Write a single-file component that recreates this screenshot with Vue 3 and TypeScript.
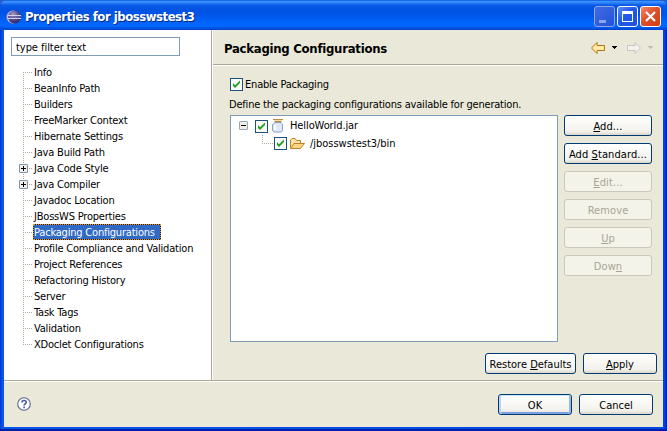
<script setup lang="ts">
interface Page {
  label: string
  expandable?: boolean
  selected?: boolean
}
interface Action {
  before: string
  key: string
  after: string
  disabled?: boolean
}

const pages: Page[] = [
  { label: 'Info' },
  { label: 'BeanInfo Path' },
  { label: 'Builders' },
  { label: 'FreeMarker Context' },
  { label: 'Hibernate Settings' },
  { label: 'Java Build Path' },
  { label: 'Java Code Style', expandable: true },
  { label: 'Java Compiler', expandable: true },
  { label: 'Javadoc Location' },
  { label: 'JBossWS Properties' },
  { label: 'Packaging Configurations', selected: true },
  { label: 'Profile Compliance and Validation' },
  { label: 'Project References' },
  { label: 'Refactoring History' },
  { label: 'Server' },
  { label: 'Task Tags' },
  { label: 'Validation' },
  { label: 'XDoclet Configurations' },
]

const actions: Action[] = [
  { before: '', key: 'A', after: 'dd...' },
  { before: 'Add ', key: 'S', after: 'tandard...' },
  { before: '', key: 'E', after: 'dit...', disabled: true },
  { before: 'Remove', key: '', after: '', disabled: true },
  { before: '', key: 'U', after: 'p', disabled: true },
  { before: 'Dow', key: 'n', after: '', disabled: true },
]
</script>

<template>
  <div class="desktop">
    <div class="window">
      <header class="titlebar">
        <svg class="app-icon" width="16" height="16" viewBox="0 0 16 16">
          <defs>
            <radialGradient id="orb" cx=".4" cy=".3" r=".75">
              <stop offset="0" stop-color="#a7a0cd" />
              <stop offset=".5" stop-color="#584f91" />
              <stop offset="1" stop-color="#2b2260" />
            </radialGradient>
          </defs>
          <circle cx="7" cy="8" r="6.500" fill="#c9b3cf" />
          <circle cx="8.500" cy="8" r="6.500" fill="url(#orb)" />
          <path d="M2 6.500H15M2 9.500H15" stroke="#d4d4f0" stroke-width="1" />
          <path d="M2 8H15" stroke="#6c659f" stroke-width="1" />
        </svg>
        <h1>Properties for jbosswstest3</h1>
        <span class="cap min"><i></i></span>
        <span class="cap max"><i></i></span>
        <span class="cap close">
          <svg width="19" height="19" viewBox="0 0 19 19"><path d="M5 5L14 14M14 5L5 14" stroke="#fff" stroke-width="2.2" /></svg>
        </span>
      </header>

      <main class="body">
        <aside class="nav">
          <input class="filter" type="text" value="type filter text" />
          <ul class="tree">
            <li v-for="page in pages" :key="page.label">
              <span class="branch">
                <svg v-if="page.expandable" class="expander" width="9" height="9" viewBox="0 0 9 9">
                  <rect x=".5" y=".5" width="8" height="8" rx=".5" fill="#f0eee6" stroke="#7b93b2" />
                  <path d="M2 4.5H7M4.5 2V7" stroke="#000" />
                </svg>
              </span>
              <span class="name" :class="{ selected: page.selected }">{{ page.label }}</span>
            </li>
          </ul>
        </aside>

        <section class="pane">
          <div class="heading">
            <h2>Packaging Configurations</h2>
            <svg width="66" height="14" viewBox="0 0 66 14">
              <path d="M4.500 7L10 1.500V4.500H17.500V9.500H10V12.500Z" fill="#ffebaa" stroke="#b8730d" stroke-linejoin="round" />
              <path d="M25 5H30V6H29V7H28V8H27V7H26V6H25Z" fill="#000" />
              <path d="M53.500 7L48 1.500V4.500H40.500V9.500H48V12.500Z" fill="#f2f1ed" stroke="#c6c4bc" stroke-linejoin="round" />
              <path d="M61 5H66V6H65V7H64V8H63V7H62V6H61Z" fill="#c2bfb2" />
            </svg>
          </div>
          <div class="content">
            <label class="enable">
              <svg class="check" width="13" height="13" viewBox="0 0 13 13">
                <rect x=".5" y=".5" width="12" height="12" fill="#fafaf7" stroke="#1c5180" />
                <path d="M3 5V8L5 10L10 5V2.500L5 7.300Z" fill="#21a121" />
              </svg>
              <span>Enable Packaging</span>
            </label>
            <p class="hint">Define the packaging configurations available for generation.</p>
            <div class="columns">
              <div class="list">
                <div class="row jar">
                  <svg class="expander" width="9" height="9" viewBox="0 0 9 9">
                    <rect x=".5" y=".5" width="8" height="8" rx=".5" fill="#f0eee6" stroke="#98a7b6" />
                    <path d="M2 4.500H7" stroke="#000" />
                  </svg>
                  <svg class="check" width="13" height="13" viewBox="0 0 13 13">
                    <rect x=".5" y=".5" width="12" height="12" fill="#fafaf7" stroke="#1c5180" />
                    <path d="M3 5V8L5 10L10 5V2.500L5 7.300Z" fill="#21a121" />
                  </svg>
                  <svg class="icon" width="16" height="16" viewBox="0 0 16 16">
                    <path d="M4 4.500H10L11.500 6.500V12.500L10.500 14H3L1.500 12.500V6.500Z" fill="#dfe8fa" stroke="#8b9fc5" />
                    <path d="M4 7V12" stroke="#fff" stroke-width="2" />
                    <path d="M2 1.500H12M3.500 3.500H10.500" stroke="#bd8a3d" />
                    <path d="M3 2.500H11" stroke="#fbdfa4" />
                  </svg>
                  <span>HelloWorld.jar</span>
                </div>
                <div class="row folder">
                  <span class="elbow"></span>
                  <svg class="check" width="13" height="13" viewBox="0 0 13 13">
                    <rect x=".5" y=".5" width="12" height="12" fill="#fafaf7" stroke="#1c5180" />
                    <path d="M3 5V8L5 10L10 5V2.500L5 7.300Z" fill="#21a121" />
                  </svg>
                  <svg class="icon" width="16" height="16" viewBox="0 0 16 16">
                    <path d="M1.500 12V4L3 2.500H6L7.500 4.500H11.500V7" fill="#fbe3a6" stroke="#bd8227" />
                    <path d="M1.500 12.500L5 7.500H15.500L11.500 12.500Z" fill="#fad583" stroke="#bd8227" stroke-linejoin="round" />
                  </svg>
                  <span>/jbosswstest3/bin</span>
                </div>
              </div>
              <div class="actions">
                <button v-for="a in actions" :key="a.before + a.key" :disabled="a.disabled" type="button">
                  {{ a.before }}<u>{{ a.key }}</u>{{ a.after }}
                </button>
              </div>
            </div>
            <div class="apply">
              <button class="restore" type="button">Restore <u>D</u>efaults</button>
              <button type="button"><u>A</u>pply</button>
            </div>
          </div>
        </section>
      </main>

      <footer class="footer">
        <svg width="14" height="14" viewBox="0 0 14 14">
          <circle cx="7" cy="7" r="6.300" fill="#fff" stroke="#56658f" stroke-width="1.100" />
          <path d="M4.900 5.600C4.900 2.900 9.200 2.900 9.200 5.300C9.200 6.900 7.100 6.800 7.100 8.500M7.100 9.600V11.200" fill="none" stroke="#4b5ba0" stroke-width="1.600" />
        </svg>
        <button class="ok" type="button">OK</button>
        <button type="button">Cancel</button>
      </footer>
    </div>
  </div>
</template>

<style>
body {
  margin: 0;
  overflow: hidden;
}
</style>

<style scoped>
* {
  box-sizing: border-box;
}
.desktop {
  width: 667px;
  height: 431px;
  background: #2a5ccc;
  font-family: Tahoma, "DejaVu Sans Condensed", "DejaVu Sans", sans-serif;
  font-stretch: condensed;
  font-size: 11px;
  letter-spacing: -0.2px;
  color: #000;
}
.window {
  display: flex;
  flex-direction: column;
  width: 667px;
  height: 431px;
  padding: 0 4px 4px;
  border-radius: 7px 7px 0 0;
  background: linear-gradient(90deg, #0030c8 0, #0855ec 2px, #0855ec 4px, #0046e0 663px, #0040dc 665px, #0018a0 667px);
  box-shadow: inset 0 -2px #0020a8;
}
.titlebar {
  display: flex;
  align-items: center;
  flex: none;
  height: 30px;
  margin: 0 -4px;
  padding: 3px 6px 0 6px;
  border-radius: 7px 7px 0 0;
  background: linear-gradient(#0a50d8 0, #3a94ff 1.500px, #2b80f8 3px, #0a5ce8 5px, #0153e2 9px, #0056e8 15px, #0064fc 22px, #0068ff 26px, #0054e4 28px, #0042cc 30px);
}
.app-icon {
  margin-right: 3px;
}
h1 {
  flex: 1;
  margin: 0;
  padding-top: 1px;
  font-size: 13px;
  line-height: 18px;
  font-weight: bold;
  letter-spacing: -0.48px;
  color: #fff;
  text-shadow: 1px 1px #06297e;
}
.cap {
  display: flex;
  align-items: center;
  justify-content: center;
  width: 21px;
  height: 21px;
  margin-left: 2px;
  border: 1px solid #fff;
  border-radius: 3px;
  background: linear-gradient(135deg, #5b8df5, #2159e8 45%, #1c52dd);
}
.min {
  border-color: #8da6ea;
  background: linear-gradient(135deg, #3f6be2, #2453d8);
}
.min i {
  width: 7px;
  height: 3px;
  margin: 9px 5px 0 0;
  background: #8ba4ec;
}
.max i {
  width: 11px;
  height: 11px;
  border: 1px solid #fff;
  border-top-width: 3px;
}
.close {
  background: linear-gradient(135deg, #f08a6c, #e0502b 45%, #cf3d14);
}
.body {
  display: flex;
  flex: none;
  height: 350px;
}
.nav {
  width: 208px;
  padding: 7px 0 0 7px;
  border-right: 1px solid #aca899;
  background: #fff;
  box-shadow: 1px 0 #fff;
}
.filter {
  display: block;
  width: 169px;
  height: 19px;
  padding: 1px 4px 0;
  border: 1px solid #7f9db9;
  background: #fff;
  color: #000;
  font: inherit;
  letter-spacing: -0.05px;
}
.tree {
  margin: 8px 0 0;
  padding: 0 0 0 8px;
  list-style: none;
}
.tree li {
  display: flex;
  height: 16px;
}
.branch {
  display: flex;
  align-items: center;
  width: 14px;
  height: 16px;
  background:
    repeating-linear-gradient(90deg, #aca899 0 1px, transparent 1px 2px) 4px 8px / 9px 1px no-repeat,
    repeating-linear-gradient(#aca899 0 1px, transparent 1px 2px) 4px 0 / 1px 16px no-repeat;
}
.tree li:first-child .branch {
  background-position: 4px 8px, 4px 8px;
}
.tree li:last-child .branch {
  background-size: 9px 1px, 1px 9px;
}
.branch .expander {
  margin-top: 1px;
}
.name {
  padding: 0 1px;
  line-height: 17px;
  white-space: nowrap;
}
.name.selected {
  width: 128px;
  outline: 1px dotted #e0962c;
  outline-offset: -1px;
  background: #316ac5;
  box-shadow: inset 0 0 0 1px #1a1a1a;
  color: #fff;
}
.pane {
  flex: 1;
  margin-left: 1px;
  background: #eae8d8;
}
.heading {
  display: flex;
  align-items: center;
  justify-content: space-between;
  height: 35px;
  padding: 1px 10px 0 11px;
  border-bottom: 1px solid #aca899;
  box-shadow: 0 1px #fff;
}
h2 {
  margin: 0;
  padding-top: 1px;
  font-size: 13px;
  font-weight: bold;
  letter-spacing: -0.26px;
}
.content {
  padding: 12px 6px 0 17px;
}
.enable {
  display: flex;
  align-items: center;
  gap: 2px;
  height: 14px;
}
.hint {
  margin: 6px 0 0 -1px;
  line-height: 15px;
}
.columns {
  display: flex;
  gap: 6px;
  margin-top: 3px;
}
.list {
  width: 328px;
  height: 227px;
  padding: 2px 0 0 8px;
  border: 1px solid #7f9db9;
  background: #fff;
}
.row {
  display: flex;
  align-items: center;
  height: 17px;
  letter-spacing: -0.02px;
}
.jar {
  position: relative;
  top: -1px;
  letter-spacing: -0.1px;
}
.jar .check {
  margin: 2px 3px 0 7px;
}
.icon {
  margin-right: 3px;
}
.folder .icon {
  margin-right: 5px;
}
.folder .check {
  margin-right: 2px;
}
.elbow {
  width: 12px;
  height: 9px;
  margin: -8px 0 0 23px;
  background:
    repeating-linear-gradient(90deg, #aca899 0 1px, transparent 1px 2px) 0 8px / 11px 1px no-repeat,
    repeating-linear-gradient(#aca899 0 1px, transparent 1px 2px) 0 0 / 1px 9px no-repeat;
}
button {
  width: 74px;
  height: 21px;
  padding: 1px 0 0;
  border: 1px solid #003c74;
  border-radius: 3px;
  background: linear-gradient(#fff, #f3f2ec 80%, #dcd7cb);
  color: #000;
  font: inherit;
  letter-spacing: 0;
  white-space: nowrap;
}
button:disabled {
  border-color: #cbc7b9;
  background: #f4f3ea;
  color: #a8a595;
}
.actions {
  display: flex;
  flex-direction: column;
  gap: 7px;
}
.actions button {
  width: 88px;
  letter-spacing: 0.1px;
}
.apply {
  display: flex;
  justify-content: flex-end;
  gap: 7px;
  margin-top: 11px;
}
.apply .restore {
  width: 91px;
}
.footer {
  display: flex;
  align-items: center;
  flex: none;
  gap: 7px;
  height: 47px;
  padding: 1px 10px 0 13px;
  border-top: 1px solid #aca899;
  background: #eae8d8;
  box-shadow: inset 0 1px #fff;
}
.footer svg {
  margin: -2px auto 0 0;
}
.footer .ok {
  box-shadow: inset 0 1px #cee7ff, inset 2px 0 #bcd4f6, inset -2px 0 #98b8ea, inset 0 -2px #7f9fe0;
}
</style>
